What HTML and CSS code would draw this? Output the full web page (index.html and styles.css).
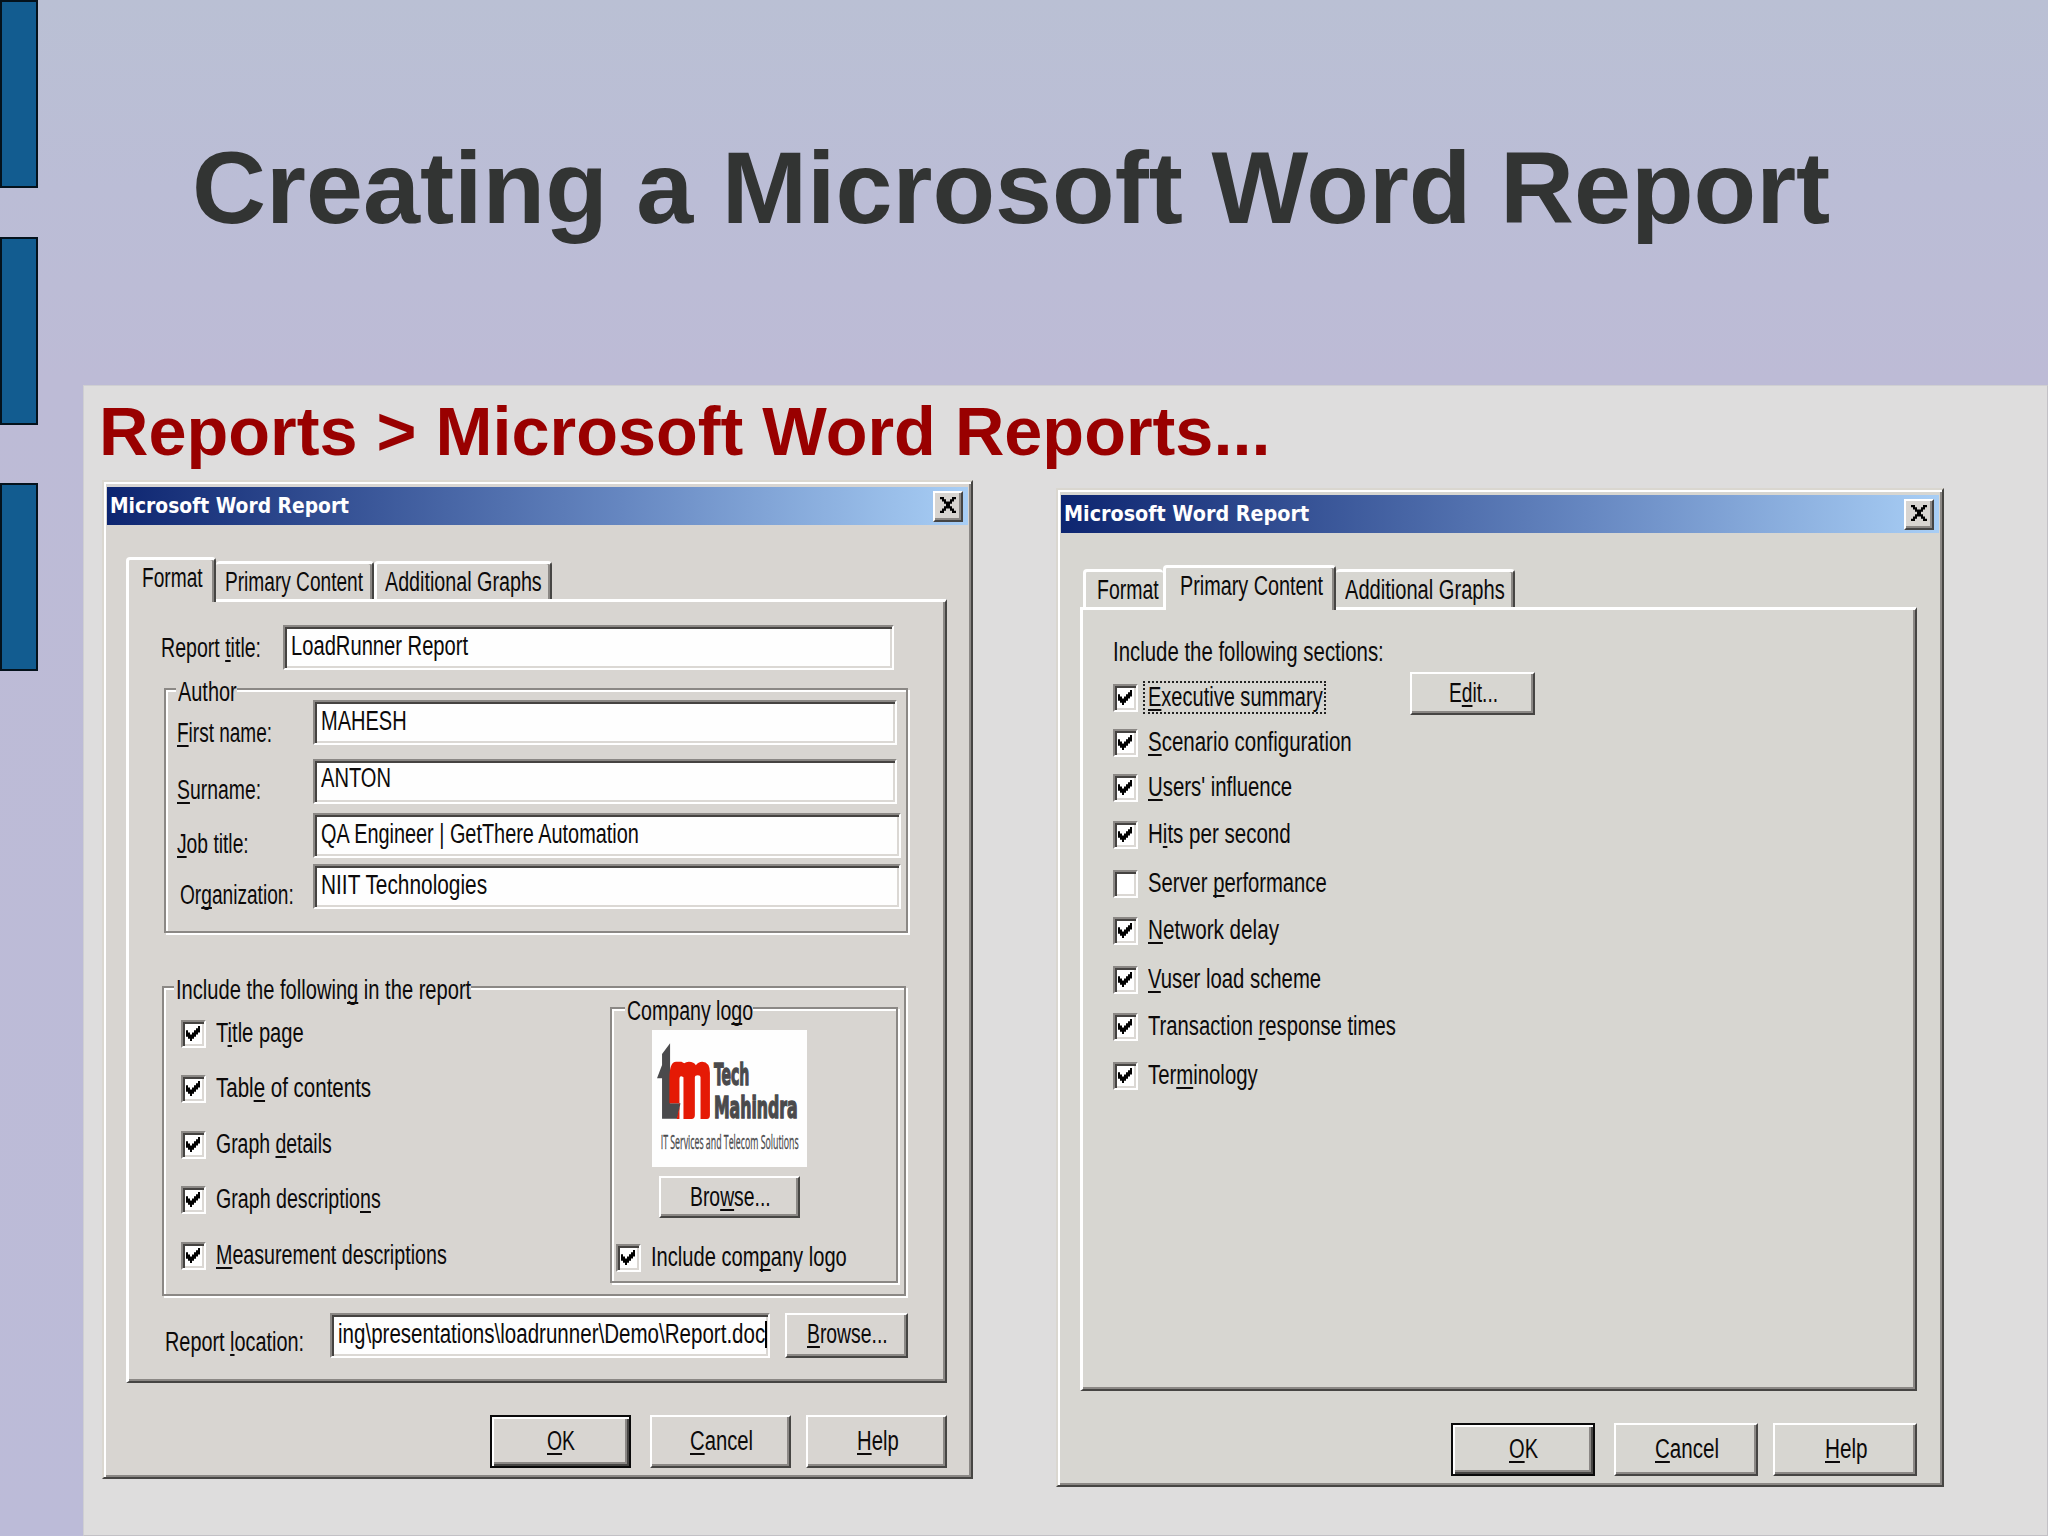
FILE: index.html
```html
<!DOCTYPE html>
<html lang="en">
<head>
    <meta charset="UTF-8">
    <meta name="viewport" content="width=device-width, initial-scale=1.0">
    <title>Creating a Microsoft Word Report</title>
    <link rel="stylesheet" href="styles.css">
</head>
<body>
    <svg class="defs" width="0" height="0">
        <symbol id="tick" viewBox="0 0 7 7" preserveAspectRatio="none">
            <path d="M0 2v3h1v1h1v1h1v-1h1v-1h1v-1h1v-1h1v-3h-1v1h-1v1h-1v1h-1v1h-1v-1h-1v-1z"/>
        </symbol>
        <symbol id="cross" viewBox="0 0 8 7" preserveAspectRatio="none">
            <path d="M0 0h2v1h1v1h2v-1h1v-1h2v1h-1v1h-1v1h-1v1h1v1h1v1h1v1h-2v-1h-1v-1h-2v1h-1v1h-2v-1h1v-1h1v-1h1v-1h-1v-1h-1v-1h-1z"/>
        </symbol>
    </svg>
    <div class="sidebar">
        <div class="bar"></div>
        <div class="bar"></div>
        <div class="bar"></div>
    </div>
    <div class="main">
        <h1><span data-w="1640">Creating a Microsoft Word Report</span></h1>
        <div class="content">
            <h2><span data-w="1173">Reports &gt; Microsoft Word Reports...</span></h2>
            <div class="dialogs">

                <div class="dialog format-dialog">
                    <div class="titlebar">
                        <span data-w="241">Microsoft Word Report</span>
                        <button class="close"><svg><use href="#cross"/></svg></button>
                    </div>
                    <div class="tabs">
                        <div class="tab active"><span data-w="63">Format</span></div>
                        <div class="tab"><span data-w="140">Primary Content</span></div>
                        <div class="tab last"><span data-w="159">Additional Graphs</span></div>
                    </div>
                    <div class="panel">
                        <div class="row title-row">
                            <label><span data-w="102">Report <u>t</u>itle:</span></label>
                            <div class="field"><span data-w="179">LoadRunner Report</span></div>
                        </div>
                        <div class="group author">
                            <div class="legend"><span data-w="61">Author</span></div>
                            <div class="row first">
                                <label><span data-w="97"><u>F</u>irst name:</span></label>
                                <div class="field"><span data-w="88">MAHESH</span></div>
                            </div>
                            <div class="row surname">
                                <label><span data-w="86"><u>S</u>urname:</span></label>
                                <div class="field"><span data-w="72">ANTON</span></div>
                            </div>
                            <div class="row job">
                                <label><span data-w="74"><u>J</u>ob title:</span></label>
                                <div class="field"><span data-w="320">QA Engineer | GetThere Automation</span></div>
                            </div>
                            <div class="row org">
                                <label><span data-w="116">Or<u>g</u>anization:</span></label>
                                <div class="field"><span data-w="168">NIIT Technologies</span></div>
                            </div>
                        </div>
                        <div class="group include">
                            <div class="legend"><span data-w="297">Include the followin<u>g</u> in the report</span></div>
                            <div class="columns">
                                <div class="checks">
                                    <div class="check"><i><svg><use href="#tick"/></svg></i><span data-w="90">T<u>i</u>tle page</span></div>
                                    <div class="check"><i><svg><use href="#tick"/></svg></i><span data-w="157">Tabl<u>e</u> of contents</span></div>
                                    <div class="check"><i><svg><use href="#tick"/></svg></i><span data-w="118">Graph <u>d</u>etails</span></div>
                                    <div class="check"><i><svg><use href="#tick"/></svg></i><span data-w="167">Graph descriptio<u>n</u>s</span></div>
                                    <div class="check"><i><svg><use href="#tick"/></svg></i><span data-w="233"><u>M</u>easurement descriptions</span></div>
                                </div>
                                <div class="group company">
                                    <div class="legend"><span data-w="128">Company lo<u>g</u>o</span></div>
                                    <svg class="logo" viewBox="12 12 463 411" preserveAspectRatio="none">
                                        <path fill="#4a4a4c" d="M66 52V232H97L88 278H42V157H27L42 117V84z"/>
                                        <path fill="#e51a05" d="M64 232V157Q64 107 84 107H100L108 112Q114 107 122 107Q138 107 143 118Q150 107 162 107Q185 108 185 140V268Q185 279 176 279H157V154Q157 148 149 148Q140 148 140 154V268Q140 279 130 279H106V154Q94 146 94 160V279H86L96 232z"/>
                                        <text class="brand" x="197" y="177" textLength="106" lengthAdjust="spacingAndGlyphs">Tech</text>
                                        <text class="brand" x="197" y="277" textLength="250" lengthAdjust="spacingAndGlyphs">Mahindra</text>
                                        <text class="tagline" x="38" y="369" textLength="412" lengthAdjust="spacingAndGlyphs">IT Services and Telecom Solutions</text>
                                    </svg>
                                    <button class="btn"><span data-w="83">Bro<u>w</u>se...</span></button>
                                    <div class="check"><i><svg><use href="#tick"/></svg></i><span data-w="198">Include com<u>p</u>any logo</span></div>
                                </div>
                            </div>
                        </div>
                        <div class="row location">
                            <label><span data-w="141">Report <u>l</u>ocation:</span></label>
                            <div class="field"><span data-w="429">ing\presentations\loadrunner\Demo\Report.doc</span><b class="caret"></b></div>
                            <button class="btn"><span data-w="83"><u>B</u>rowse...</span></button>
                        </div>
                    </div>
                    <div class="actions">
                        <button class="btn default"><span data-w="30"><u>O</u>K</span></button>
                        <button class="btn cancel"><span data-w="65"><u>C</u>ancel</span></button>
                        <button class="btn"><span data-w="44"><u>H</u>elp</span></button>
                    </div>
                </div>

                <div class="dialog sections-dialog">
                    <div class="titlebar">
                        <span data-w="247">Microsoft Word Report</span>
                        <button class="close"><svg><use href="#cross"/></svg></button>
                    </div>
                    <div class="tabs">
                        <div class="tab first"><span data-w="64">Format</span></div>
                        <div class="tab active"><span data-w="145">Primary Content</span></div>
                        <div class="tab"><span data-w="162">Additional Graphs</span></div>
                    </div>
                    <div class="panel">
                        <div class="columns">
                            <div class="sections">
                                <p><span data-w="273">Include the following sections:</span></p>
                                <div class="checks">
                                    <div class="check"><i><svg><use href="#tick"/></svg></i><div class="focus"><span data-w="177"><u>E</u>xecutive summary</span></div></div>
                                    <div class="check"><i><svg><use href="#tick"/></svg></i><span data-w="206"><u>S</u>cenario configuration</span></div>
                                    <div class="check"><i><svg><use href="#tick"/></svg></i><span data-w="146"><u>U</u>sers' influence</span></div>
                                    <div class="check"><i><svg><use href="#tick"/></svg></i><span data-w="145">H<u>i</u>ts per second</span></div>
                                    <div class="check"><i></i><span data-w="181">Server <u>p</u>erformance</span></div>
                                    <div class="check"><i><svg><use href="#tick"/></svg></i><span data-w="133"><u>N</u>etwork delay</span></div>
                                    <div class="check"><i><svg><use href="#tick"/></svg></i><span data-w="175"><u>V</u>user load scheme</span></div>
                                    <div class="check"><i><svg><use href="#tick"/></svg></i><span data-w="250">Transaction <u>r</u>esponse times</span></div>
                                    <div class="check"><i><svg><use href="#tick"/></svg></i><span data-w="112">Ter<u>m</u>inology</span></div>
                                </div>
                            </div>
                            <button class="btn edit"><span data-w="51">E<u>d</u>it...</span></button>
                        </div>
                    </div>
                    <div class="actions">
                        <button class="btn default"><span data-w="31"><u>O</u>K</span></button>
                        <button class="btn cancel"><span data-w="66"><u>C</u>ancel</span></button>
                        <button class="btn"><span data-w="45"><u>H</u>elp</span></button>
                    </div>
                </div>

            </div>
        </div>
    </div>

    <script>
        // squeeze every label to its width, the way the narrow system font runs
        document.querySelectorAll('[data-w]').forEach(function (el) {
            const width = Number(el.dataset.w) - 2;
            const natural = el.offsetWidth;
            el.style.transform = 'scaleX(' + width / natural + ')';
            el.style.marginRight = (width - natural) + 'px';
        });
    </script>
</body>
</html>
```
FILE: styles.css
```css
* {
    box-sizing: border-box;
}
body {
    margin: 0;
    width: 2048px;
    height: 1536px;
    overflow: hidden;
    display: flex;
    font-family: "Liberation Sans", Arial, sans-serif;
    font-size: 27px;
    line-height: 27px;
    color: #0c0a0a;
    background: linear-gradient(#bac0d4 0, #bbbdd6 190px, #bdbbd6 380px, #bcbbd8 100%);
}
.defs {
    position: absolute;
}
.sidebar {
    width: 38px;
    flex: none;
}
.bar {
    height: 188px;
    background-color: #125c90;
    border: 2px solid #04121c;
    margin-bottom: 49px;
}
.bar:nth-child(2) {
    margin-bottom: 58px;
}
.main {
    flex: 1;
    display: flex;
    flex-direction: column;
    padding-left: 45px;
}
h1, h2, p {
    margin: 0;
}
h1 {
    height: 385px;
    padding: 137px 0 0 107px;
    font-size: 102px;
    line-height: 102px;
    color: #323433;
}
h2 {
    height: 94px;
    padding: 11px 0 0 13px;
    font-size: 69px;
    line-height: 69px;
    color: #990000;
}
[data-w] {
    display: inline-block;
    flex: none;
    margin-left: 2px;
    white-space: nowrap;
    transform-origin: 0 0;
}
u {
    text-decoration-thickness: 2px;
    text-underline-offset: 3px;
    text-decoration-skip-ink: none;
}
.content {
    flex: 1;
    background-color: #dedddd;
    border: 1px solid #c3c1c6;
    border-top-color: #cfcfd2;
    border-left-color: #cfcfd2;
}
.dialogs {
    display: flex;
    align-items: flex-start;
    padding-left: 18px;
}
.dialog {
    flex: none;
    display: flex;
    flex-direction: column;
    padding: 5px 3px 0;
    background-color: #d8d5d1;
    border: 2px solid;
    border-color: #dad7d0 #464543 #464543 #dad7d0;
    box-shadow: inset 2px 2px #fff, inset -2px -2px #8b8885;
}
.format-dialog {
    width: 871px;
    height: 999px;
}
.sections-dialog {
    width: 888px;
    height: 999px;
    margin: 8px 0 0 83px;
    background-color: #d7d6d1;
}
.titlebar {
    display: flex;
    justify-content: space-between;
    align-items: center;
    height: 38px;
    flex: none;
    padding: 0 5px 0 1px;
    font-family: "DejaVu Sans Condensed", "DejaVu Sans", sans-serif;
    font-size: 22px;
    font-weight: bold;
    color: #fff;
    background: linear-gradient(90deg, #0d2570, #6687c1 60%, #a8cef5);
}
.titlebar [data-w] {
    margin-top: -2px;
}
.close {
    width: 30px;
    height: 31px;
    padding: 0;
    display: flex;
    align-items: center;
    justify-content: center;
    background-color: #d8d5d1;
    border: 2px solid;
    border-color: #fff #444 #444 #fff;
    box-shadow: inset -2px -2px #8b8885;
}
.close svg {
    width: 16px;
    height: 16px;
    margin: -2px 0 0 0;
}

.tabs {
    display: flex;
    align-items: flex-end;
    height: 77px;
    flex: none;
    margin-bottom: -3px;
    padding-left: 19px;
}
.tab {
    height: 38px;
    margin-bottom: 3px;
    padding: 5px 0 0 7px;
    border-top: 3px solid #fff;
    border-right: 2px solid #464543;
    border-radius: 4px 4px 0 0;
    box-shadow: inset -2px 0 #8b8885;
    width: 158px;
}
.tab.last {
    width: 178px;
    padding-left: 6px;
    border-left: 3px solid #fff;
}
.tab.active {
    position: relative;
    width: 90px;
    height: 45px;
    margin-bottom: 0;
    padding-left: 11px;
    border-left: 3px solid #fff;
    background-color: #d8d5d1;
}
.sections-dialog .tabs {
    padding-left: 22px;
}
.sections-dialog .tab {
    width: 179px;
}
.sections-dialog .tab.first {
    width: 80px;
    padding-left: 9px;
    border-left: 3px solid #fff;
    border-right: none;
    box-shadow: none;
}
.sections-dialog .tab.active {
    width: 173px;
    padding-left: 12px;
    background-color: #d7d6d1;
}
.panel {
    width: 821px;
    height: 784px;
    flex: none;
    margin-left: 19px;
    padding-top: 23px;
    border: 3px solid;
    border-color: #fff #464543 #464543 #fff;
    border-right-width: 2px;
    border-bottom-width: 2px;
    box-shadow: inset -2px -2px #8b8885;
}
.row {
    display: flex;
    align-items: flex-start;
}
.field {
    display: flex;
    height: 45px;
    padding: 6px 0 0 4px;
    overflow: hidden;
    background-color: #fefefe;
    border: 2px solid;
    border-color: #8b8885 #fff #fff #8b8885;
    box-shadow: inset 2px 2px #454341, inset -2px -2px #dbd8d4;
}
.title-row {
    padding-left: 30px;
}
.title-row label {
    width: 124px;
    padding-top: 10px;
}
.title-row .field {
    width: 611px;
}

.group {
    border: 2px solid #8b8885;
    box-shadow: 2px 2px #fff, inset 2px 2px #fff;
}
.legend {
    width: max-content;
    height: 27px;
    margin: -11px 0 0 10px;
    background-color: #d8d5d1;
}
.author {
    width: 744px;
    height: 245px;
    margin: 18px 0 0 35px;
}
.author label {
    width: 147px;
    flex: none;
    padding: 18px 0 0 9px;
}
.author .field {
    width: 584px;
}
.author .first {
    margin-top: -6px;
}
.author .first label {
    padding-top: 20px;
}
.author .surname {
    margin-top: 12px;
}
.author .surname .field {
    padding-top: 4px;
}
.author .job {
    margin-top: 9px;
}
.author .org {
    margin-top: 6px;
}
.author .org label {
    padding-left: 12px;
}
.author .job .field, .author .org .field {
    width: 588px;
}
.include {
    width: 744px;
    height: 310px;
    margin: 53px 0 0 33px;
}
.columns {
    display: flex;
    align-items: flex-start;
}
.checks {
    display: grid;
}
.include .checks {
    width: 446px;
    padding: 16px 0 0 17px;
    grid-template-rows: 55px 56px 55px 56px 28px;
}
.check {
    display: flex;
    align-items: flex-start;
}
.check i {
    width: 25px;
    height: 28px;
    margin-right: 8px;
    padding: 4px 0 0 3px;
    background-color: #fff;
    border: 2px solid;
    border-color: #8b8885 #fff #fff #8b8885;
    box-shadow: inset 2px 2px #454341, inset -2px -2px #dbd8d4;
}
.check svg {
    display: block;
    width: 14px;
    height: 15px;
}
.company {
    width: 288px;
    height: 276px;
    margin-top: 3px;
}
.company .legend {
    margin-left: 13px;
}
.logo {
    display: block;
    width: 155px;
    height: 137px;
    margin: 5px 0 9px 40px;
    overflow: visible;
    background-color: #fefefe;
}
.brand {
    font-family: "DejaVu Sans Condensed", "DejaVu Sans", sans-serif;
    font-size: 88px;
    font-weight: bold;
    fill: #4a4a4c;
    stroke: #4a4a4c;
    stroke-width: 4px;
}
.tagline {
    font-family: "Open Sans", sans-serif;
    font-size: 62px;
    fill: #4a4a4c;
    stroke: #4a4a4c;
    stroke-width: 1px;
}
.btn {
    display: flex;
    align-items: center;
    justify-content: center;
    width: 141px;
    height: 53px;
    padding: 0;
    font: inherit;
    color: inherit;
    background-color: transparent;
    border: 2px solid;
    border-color: #fff #464543 #464543 #fff;
    box-shadow: inset -2px -2px #8b8885;
}
.btn.default {
    border-color: #0a0a0a;
    box-shadow: inset 2px 2px #fff, inset -2px -2px #464543, inset -4px -4px #8b8885;
}
.company .btn {
    height: 42px;
    margin: 0 0 26px 47px;
}
.company .check {
    padding-left: 4px;
}
.location {
    margin-top: 17px;
    padding-left: 34px;
}
.location label {
    width: 167px;
    padding-top: 16px;
}
.location .field {
    width: 440px;
    margin-right: 15px;
}
.location .btn {
    width: 123px;
    height: 45px;
    padding-bottom: 2px;
}
.caret {
    width: 2px;
    height: 27px;
    background-color: #000;
}
.actions {
    display: flex;
    justify-content: flex-end;
    margin-top: 32px;
    padding-right: 21px;
}
.cancel {
    margin: 0 15px 0 19px;
}

.sections-dialog .panel {
    width: 837px;
    padding-top: 29px;
}
.sections {
    width: 327px;
}
.sections p {
    padding-left: 28px;
    height: 45px;
}
.sections .checks {
    padding-left: 30px;
    grid-template-rows: 45px 45px 47px 49px 47px 49px 47px 49px 28px;
}
.focus {
    outline: 2px dotted #222;
    outline-offset: 1px;
}
.edit {
    width: 125px;
    height: 43px;
    margin-top: 33px;
}
.sections-dialog .actions .btn {
    width: 144px;
}
.sections-dialog .actions {
    padding-right: 22px;
}
```
